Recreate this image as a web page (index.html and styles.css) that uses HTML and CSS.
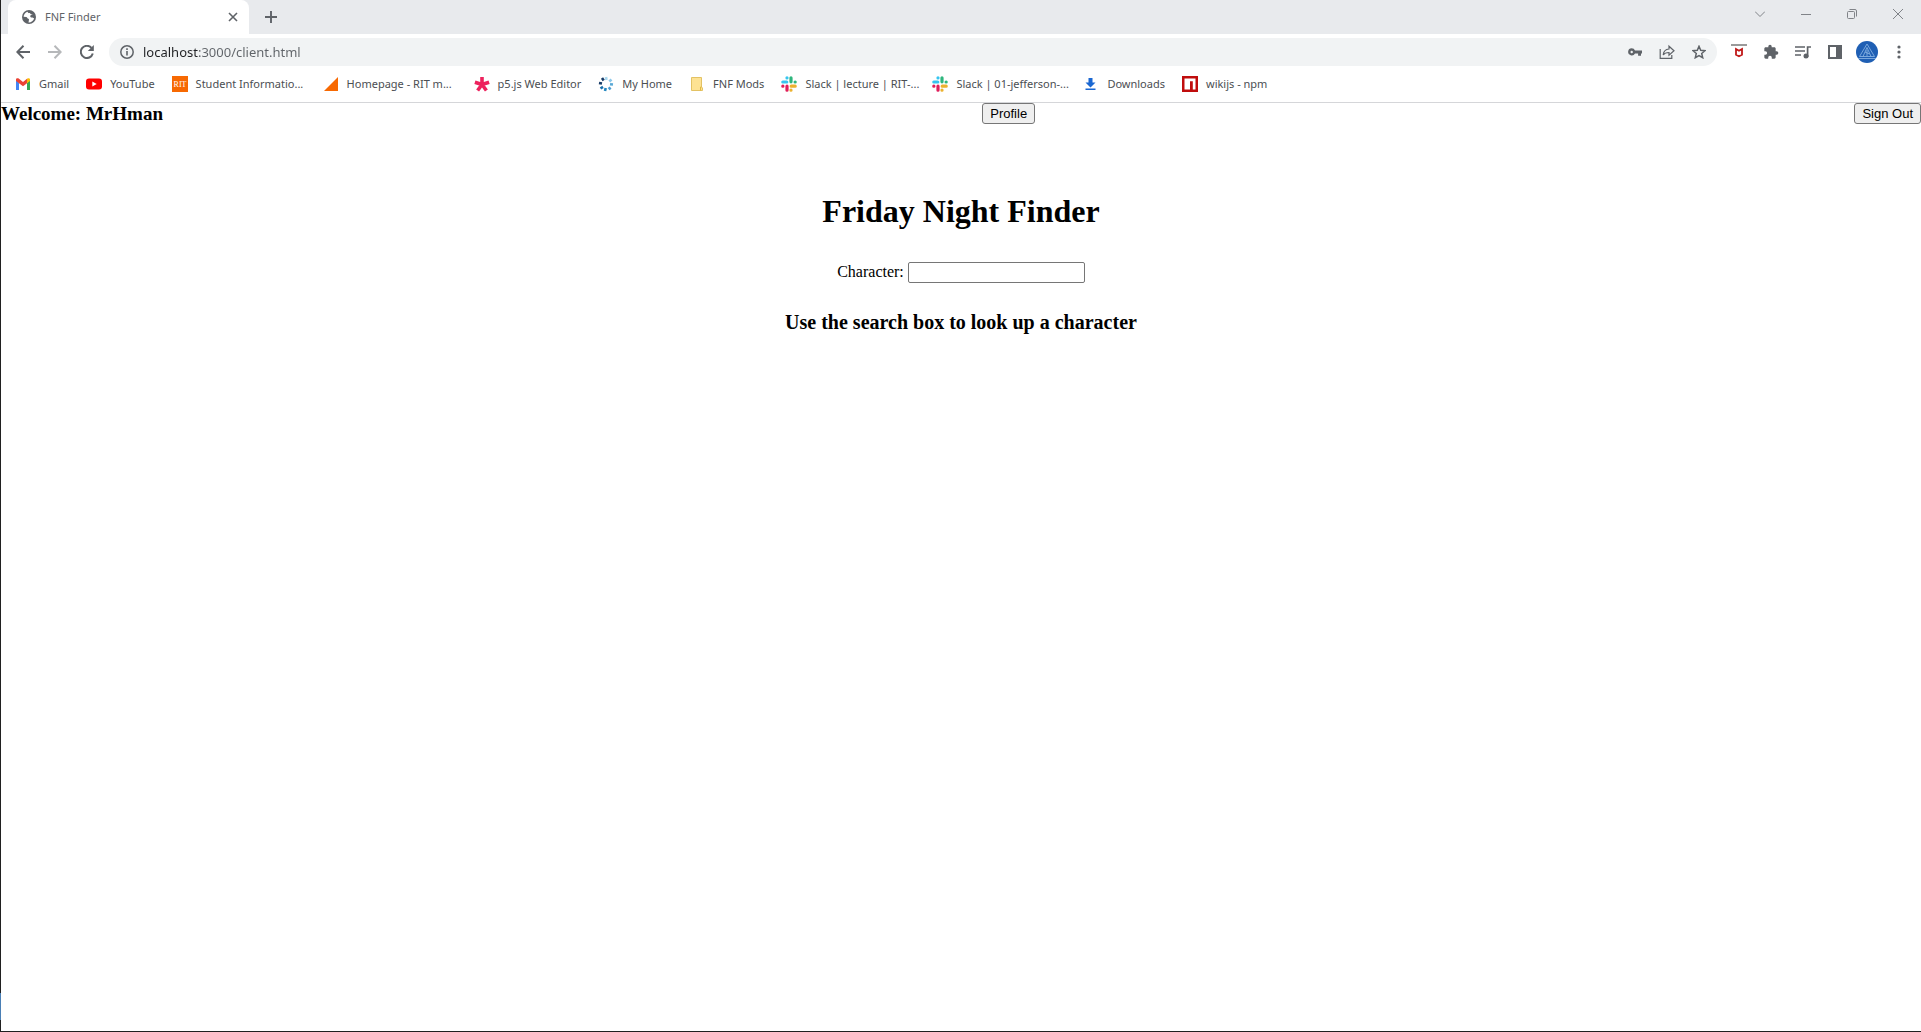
FILE: index.html
```html
<!DOCTYPE html>
<html lang="en">
<head>
<meta charset="utf-8">
<title>FNF Finder</title>
<link rel="stylesheet" href="styles.css">
</head>
<body>
<svg class="defs" aria-hidden="true">
  <symbol id="slack" viewBox="0 0 16 16">
    <g fill="none" stroke-width="3.2" stroke-linecap="round">
      <path stroke="#36c5f0" d="M1.8 6h4M6 1.8v.1"/>
      <path stroke="#2eb67d" d="M10 1.8v4M14.2 6h-.1"/>
      <path stroke="#ecb22e" d="M14.2 10.2h-4M10 14.2v-.1"/>
      <path stroke="#e01e5a" d="M6 14.2v-4M1.8 10.2h.1"/>
    </g>
  </symbol>
</svg>
<div class="window">
  <div class="tabstrip">
    <div class="tab">
      <svg class="i14" viewBox="0 0 14 14"><circle cx="7" cy="7" r="7" fill="#5f6368"/><path fill="#fff" d="M5.500 1.800C3.200 2.500 1.700 4.600 1.600 6.800L4.200 7c1 .1 1 1.600 2.200 1.800.8.200.6 1.200.4 1.900l-.3 1.700c2.500.2 5-1.500 5.700-4.200-1 .2-1.500-.7-2.500-.6-1 0-1.600-.6-1.500-1.500.1-.8.900-1 1.700-1l.6-.8c-1 .3-1.800 0-2.300-.8-.4-.7-1-.2-1.600-.4-.8-.2-.7-.9-1.100-1.300z"/></svg>
      <span class="tab-title">FNF Finder</span>
      <button class="icon-btn" aria-label="Close tab"><svg class="i10" viewBox="0 0 10 10"><path d="M1 1l8 8M9 1L1 9" stroke="#5f6368" stroke-width="1.600"/></svg></button>
    </div>
    <button class="icon-btn new-tab" aria-label="New tab"><svg class="i12" viewBox="0 0 12 12"><path d="M6 0v12M0 6h12" stroke="#5f6368" stroke-width="1.900"/></svg></button>
    <div class="caption">
      <button class="cap-btn" aria-label="Search tabs"><svg class="i10" viewBox="0 0 10 10"><path d="M0 2.500l5 5 5-5"/></svg></button>
      <button class="cap-btn" aria-label="Minimize"><svg class="i10" viewBox="0 0 10 10"><path d="M0 5.500h10"/></svg></button>
      <button class="cap-btn" aria-label="Restore"><svg class="i10" viewBox="0 0 10 10"><rect x=".5" y="2.500" width="7" height="7" rx="1"/><path d="M2.500.5H8q1.500 0 1.500 1.500v5.500"/></svg></button>
      <button class="cap-btn" aria-label="Close"><svg class="i10" viewBox="0 0 10 10"><path d="M0 0l10 10M10 0L0 10"/></svg></button>
    </div>
  </div>

  <div class="toolbar">
    <button class="tool" aria-label="Back"><svg class="i14" viewBox="0 0 14 14"><path d="M14 7H1.500M7.500.8L1.300 7l6.200 6.200" class="line"/></svg></button>
    <button class="tool off" aria-label="Forward"><svg class="i14" viewBox="0 0 14 14"><path d="M0 7h12.500M6.500.8L12.700 7l-6.200 6.200" class="line"/></svg></button>
    <button class="tool" aria-label="Reload"><svg class="i14" viewBox="0 0 14 14"><path d="M12.800 8.600A6.100 6.100 0 1 1 11.500 2.900" class="line"/><path d="M13.800 0v6H7.800z" fill="#5f6368"/></svg></button>
    <div class="omnibox">
      <svg class="i14" viewBox="0 0 14 14"><circle cx="7" cy="7" r="6.200" fill="none" stroke="#5f6368" stroke-width="1.500"/><path d="M7 6v4.500M7 3.300v1.600" stroke="#5f6368" stroke-width="1.600"/></svg>
      <input class="url" type="text" aria-label="Address" value="localhost:3000/client.html">
      <button class="tool" aria-label="Passwords"><svg class="i14" viewBox="0 0 14 14"><path fill="#5f6368" fill-rule="evenodd" d="M3.700 3.300a3.600 3.600 0 0 1 3.300 2.300h7v2.800h-1v2.400h-2.900V8.400H7A3.600 3.600 0 1 1 3.700 3.300zm0 2.500a1.200 1.200 0 1 0 0 2.400 1.200 1.200 0 0 0 0-2.400z"/></svg></button>
      <button class="tool" aria-label="Share"><svg class="i16" viewBox="0 0 16 16"><g fill="none" stroke="#5f6368" stroke-width="1.200"><path d="M1.200 5v9.400h11.600V11"/><path d="M4.200 11C4.500 7.500 6.500 5.300 10 5V2.200l5 4.600-5 4.400V8.500C7.500 8.500 5.500 9 4.200 11z"/></g></svg></button>
      <button class="tool" aria-label="Bookmark this tab"><svg class="i14" viewBox="0 0 14 14"><path fill="none" stroke="#5f6368" stroke-width="1.500" d="M7 1.300l1.700 4 4.300.4-3.300 2.800 1 4.200L7 10.500l-3.700 2.200 1-4.200L1 5.700l4.300-.4z"/></svg></button>
    </div>
    <div class="extensions">
      <button class="tool" aria-label="McAfee"><svg class="i16" viewBox="0 0 16 16"><path fill="#9a9a9a" d="M0 0h16v2H0z"/><path fill="none" stroke="#c01818" stroke-width="1.800" d="M5 5v5.800l3 1.400 3-1.400V5L8 6.800z"/></svg></button>
      <button class="tool" aria-label="Extensions"><svg class="i16" viewBox="0 0 24 24"><path fill="#5f6368" d="M20.500 11H19V7c0-1.100-.9-2-2-2h-4V3.500a2.500 2.500 0 0 0-5 0V5H4c-1.100 0-2 .9-2 2v3.800h1.500a2.700 2.700 0 0 1 0 5.400H2V20c0 1.100.9 2 2 2h3.800v-1.500a2.700 2.700 0 0 1 5.400 0V22H17c1.100 0 2-.9 2-2v-4h1.500a2.500 2.500 0 0 0 0-5z"/></svg></button>
      <button class="tool" aria-label="Media"><svg class="i16" viewBox="0 0 16 16"><path d="M0 3h10M0 7h10M0 11h6M12.600 13V3H16" fill="none" stroke="#5f6368" stroke-width="1.700"/><circle cx="11" cy="12" r="2.500" fill="#5f6368"/></svg></button>
      <button class="tool" aria-label="Side panel"><svg class="i14" viewBox="0 0 14 14"><path fill="#5f6368" fill-rule="evenodd" d="M0 0h14v14H0zM2 2v10h6V2z"/></svg></button>
      <button class="tool" aria-label="Account"><svg class="i22" viewBox="0 0 22 22"><circle cx="11" cy="11" r="11" fill="#1f5fb4"/><g fill="none" stroke="#8fb9e6" stroke-width=".8"><path d="M11 3L3.500 15.500h15z"/><path d="M11 6.500l-4 9M11 6.500l4 9M9 11l4.500 2M11 9v6M2 17.500h18"/></g></svg></button>
      <button class="tool" aria-label="Menu"><svg class="i14" viewBox="0 0 14 14"><g fill="#5f6368"><circle cx="7" cy="2" r="1.600"/><circle cx="7" cy="7" r="1.600"/><circle cx="7" cy="12" r="1.600"/></g></svg></button>
    </div>
  </div>

  <nav class="bookmarks">
    <a href="#"><svg class="i16" viewBox="0 0 16 16"><path fill="#4285f4" d="M1 3v11h3V7z"/><path fill="#34a853" d="M15 3v11h-3V7z"/><path fill="#ea4335" d="M1 3.500C1 2 2.800 1.800 3.700 2.600L8 5.900l4.300-3.300-.3 4.700-4 3-4-3L1 5z"/><path fill="#fbbc04" d="M12 2.800c1-.9 3-.7 3 1V5l-3 2.300z"/></svg>Gmail</a>
    <a href="#"><svg class="i16" viewBox="0 0 16 16"><rect y="2.500" width="16" height="11" rx="3" fill="red"/><path fill="#fff" d="M6.300 5.500v5L10.700 8z"/></svg>YouTube</a>
    <a class="long" href="#"><svg class="i16" viewBox="0 0 16 16"><path fill="#f76902" d="M0 0h16v16H0z"/><text x="8" y="11" class="rit">RIT</text></svg>Student Informatio...</a>
    <a class="long" href="#"><svg class="i16" viewBox="0 0 16 16"><path fill="#f76902" d="M15 1v14H1z"/></svg>Homepage - RIT m...</a>
    <a href="#"><svg class="i16" viewBox="0 0 16 16"><path stroke="#ed225d" stroke-width="3.600" d="M8 8.500V1M8 8.500l7.100-2.300M8 8.500l4.400 6M8 8.500l-4.400 6M8 8.500L.9 6.200"/></svg>p5.js Web Editor</a>
    <a href="#"><svg class="i16" viewBox="0 0 16 16"><g stroke-width="2.600"><path stroke="#a9d8ef" d="M8 1l.5 3"/><path stroke="#8cc8ea" d="M13.500 3.500l-2.200 2"/><path stroke="#5aa9d6" d="M15 8.500l-3-.3"/><path stroke="#4a9bd0" d="M12.500 13.500l-1.700-2.300"/><path stroke="#2488c0" d="M7 15l.7-3"/><path stroke="#1a70ad" d="M2.500 12.500L5 10.800"/><path stroke="#173b67" d="M1 7l3 .6M4 2l1.700 2.500"/></g></svg>My Home</a>
    <a href="#"><svg class="i16" viewBox="0 0 16 16"><path fill="#fde293" stroke="#e3c264" d="M2.500 1.500h10v9.500l1 1v2.500h-11z"/><path fill="none" stroke="#e3b93f" d="M11.500 14.500V11h1"/></svg>FNF Mods</a>
    <a class="long" href="#"><svg class="i16"><use href="#slack"/></svg>Slack | lecture | RIT-...</a>
    <a class="long" href="#"><svg class="i16"><use href="#slack"/></svg>Slack | 01-jefferson-...</a>
    <a href="#"><svg class="i16" viewBox="0 0 16 16"><path fill="#1a67d2" d="M5.500 2h4v4.500h3L7.500 11.500l-5-5h3zM2.500 12.500h10v1.600h-10z"/></svg>Downloads</a>
    <a href="#"><svg class="i16" viewBox="0 0 16 16"><path fill="#c00d0d" d="M0 0h16v16H0z"/><path fill="#fff" d="M2.500 2.500h11v11h-2.700V5.300H8v8.200H2.500z"/></svg>wikijs - npm</a>
  </nav>

  <div class="page">
    <header class="account">
      <h3>Welcome: MrHman</h3>
      <button type="button">Profile</button>
      <button type="button">Sign Out</button>
    </header>
    <main class="finder">
      <h1>Friday Night Finder</h1>
      <div class="search"><label for="character">Character:</label><input id="character" type="text"></div>
      <h3 class="hint">Use the search box to look up a character</h3>
    </main>
  </div>
</div>
</body>
</html>
```
FILE: styles.css
```css
* { box-sizing: border-box; }

body {
  margin: 0;
  background: #fff;
  font-family: "Liberation Serif", serif;
  font-size: 16px;
  color: #000;
}

.defs { display: none; }

/* The desktop shows as a thin dark edge with a blue patch near the foot. */
.window {
  display: flex;
  flex-direction: column;
  min-height: 100vh;
  padding-left: 1px;
  border-bottom: 1px solid #202020;
  background: linear-gradient(to top, #202020 11px, #4a7fb5 11px, #4a7fb5 38px, #202020 38px) left / 1px 100% no-repeat;
}

svg { display: block; flex: none; }
.i10 { width: 10px; height: 10px; }
.i12 { width: 12px; height: 12px; }
.i14 { width: 14px; height: 14px; }
.i16 { width: 16px; height: 16px; }
.i22 { width: 22px; height: 22px; }

.tabstrip,
.toolbar,
.bookmarks { font-family: "Noto Sans", "Open Sans", sans-serif; }

.icon-btn,
.tool,
.cap-btn {
  display: flex;
  align-items: center;
  justify-content: center;
  padding: 0;
  border: 0;
  background: none;
}

.tabstrip {
  display: flex;
  height: 34px;
  padding-left: 7px;
  background: #e8eaed;
}

.tab {
  display: flex;
  align-items: center;
  gap: 9px;
  width: 241px;
  padding: 0 11px 0 14px;
  border-radius: 8px 8px 0 0;
  background: #fff;
}

.tab-title {
  flex: 1;
  font-size: 11px;
  line-height: 16px;
  color: #5f6368;
}

.new-tab { width: 44px; }

.caption { display: flex; margin-left: auto; height: 28px; }
.cap-btn { width: 46px; }
.cap-btn path,
.cap-btn rect { fill: none; stroke: #808388; }

.toolbar {
  display: flex;
  align-items: center;
  height: 36px;
  padding: 0 6px;
}

.tool { width: 32px; height: 28px; }
.line { fill: none; stroke: #5f6368; stroke-width: 2; }
.off { opacity: 0.45; }

.omnibox {
  flex: 1;
  display: flex;
  align-items: center;
  height: 28px;
  margin-left: 6px;
  padding: 0 2px 0 11px;
  border-radius: 14px;
  background: #f1f3f4;
}

.url {
  flex: 1;
  min-width: 0;
  margin-left: 9px;
  padding: 0;
  border: 0;
  outline: 0;
  font-family: inherit;
  font-size: 13px;
  color: transparent;
  background: linear-gradient(to right, #202124 56px, #5f6368 56px);
  background-clip: text;
  -webkit-background-clip: text;
}

.extensions { display: flex; margin-left: 6px; }

.bookmarks {
  display: flex;
  align-items: center;
  gap: 17px;
  height: 33px;
  padding: 0 14px 4px;
  border-bottom: 1px solid #d5d6d9;
}

.bookmarks a {
  display: flex;
  align-items: center;
  gap: 8px;
  font-size: 11px;
  line-height: 16px;
  white-space: nowrap;
  color: #4b4e52;
  text-decoration: none;
}

.bookmarks .long { width: 134px; }

.rit {
  font-family: "Liberation Serif", serif;
  font-size: 8px;
  text-anchor: middle;
  fill: #fff;
}

h1, h3 { margin: 0; }
h1 { font-size: 32px; line-height: 37px; }
h3 { font-size: 19px; line-height: 22px; }
.hint { font-size: 20px; }

.account {
  display: flex;
  justify-content: space-between;
  align-items: flex-start;
}

.account button {
  height: 21px;
  padding: 0 7px;
  border: 1px solid #767676;
  border-radius: 3px;
  background: #efefef;
  font-family: "Liberation Sans", sans-serif;
  font-size: 13px;
}

.finder {
  display: flex;
  flex-direction: column;
  align-items: center;
  padding-top: 68px;
}

.search {
  display: flex;
  align-items: flex-start;
  gap: 4px;
  margin: 32px 0 28px;
  line-height: 20px;
}

.search input {
  width: 177px;
  height: 21px;
  border: 1px solid #767676;
  border-radius: 2px;
}
```
